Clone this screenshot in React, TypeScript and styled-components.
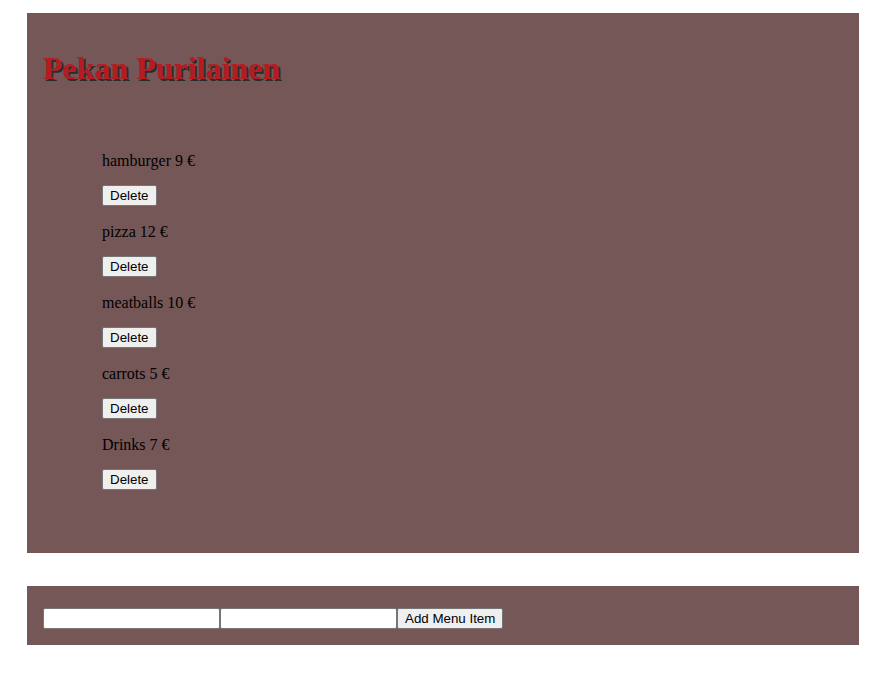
import React from "react";
import styled, { createGlobalStyle } from "styled-components";

const Global = createGlobalStyle`
  html, body { margin: 0; padding: 0; background: #ffffff; }
  body { font-family: "Liberation Serif", "Times New Roman", serif; font-size: 16px; color: #000; }
`;

const Page = styled.div`
  display: flex;
  flex-direction: column;
  gap: 33px;
  padding: 13px 31px 0 27px;
`;

const Panel = styled.section<{ $pad: string }>`
  display: flex;
  flex-direction: column;
  background: #765757;
  padding: ${(p) => p.$pad};
`;

const Title = styled.h1`
  margin: 21px 0 0 0;
  font-family: "Liberation Serif", "Times New Roman", serif;
  font-size: 32px;
  font-weight: bold;
  line-height: 37px;
  color: #b51c22;
  text-shadow: 2px 2px 0 #2b2b2b;
`;

const List = styled.ul`
  list-style: none;
  margin: 64px 0 47px 0;
  padding: 0 0 0 59px;
  display: flex;
  flex-direction: column;
  gap: 16px;
`;

const Item = styled.li`
  display: flex;
  flex-direction: column;
  align-items: flex-start;
  gap: 16px;
`;

const ItemText = styled.p`
  margin: 0;
  line-height: 19px;
  height: 18px;
`;

const Button = styled.button`
  box-sizing: border-box;
  height: 21px;
  padding: 1px 7px;
  font-family: "Liberation Sans", Arial, sans-serif;
  font-size: 13.333px;
  color: #000;
  background: #efefef;
  border: 1px solid #767676;
  border-radius: 2px;
  line-height: 16px;
  cursor: default;
`;

const Form = styled.form`
  display: flex;
  align-items: center;
  margin: 0;
`;

const Input = styled.input`
  box-sizing: border-box;
  width: 177px;
  height: 21px;
  padding: 1px 2px;
  margin: 0;
  border: 1px solid #767676;
  border-radius: 2px;
  background: #ffffff;
  font-family: "Liberation Sans", Arial, sans-serif;
  font-size: 13.333px;
`;

const items = [
  { name: "hamburger", price: 9 },
  { name: "pizza", price: 12 },
  { name: "meatballs", price: 10 },
  { name: "carrots", price: 5 },
  { name: "Drinks", price: 7 },
];

export default function App() {
  return (
    <>
      <Global />
      <Page>
        <Panel $pad="16px">
          <Title>Pekan Purilainen</Title>
          <List>
            {items.map((it) => (
              <Item key={it.name}>
                <ItemText>
                  {it.name} {it.price} €
                </ItemText>
                <Button type="button">Delete</Button>
              </Item>
            ))}
          </List>
        </Panel>
        <Panel $pad="22px 16px 16px 16px">
          <Form onSubmit={(e) => e.preventDefault()}>
            <Input type="text" />
            <Input type="text" />
            <Button type="submit">Add Menu Item</Button>
          </Form>
        </Panel>
      </Page>
    </>
  );
}
